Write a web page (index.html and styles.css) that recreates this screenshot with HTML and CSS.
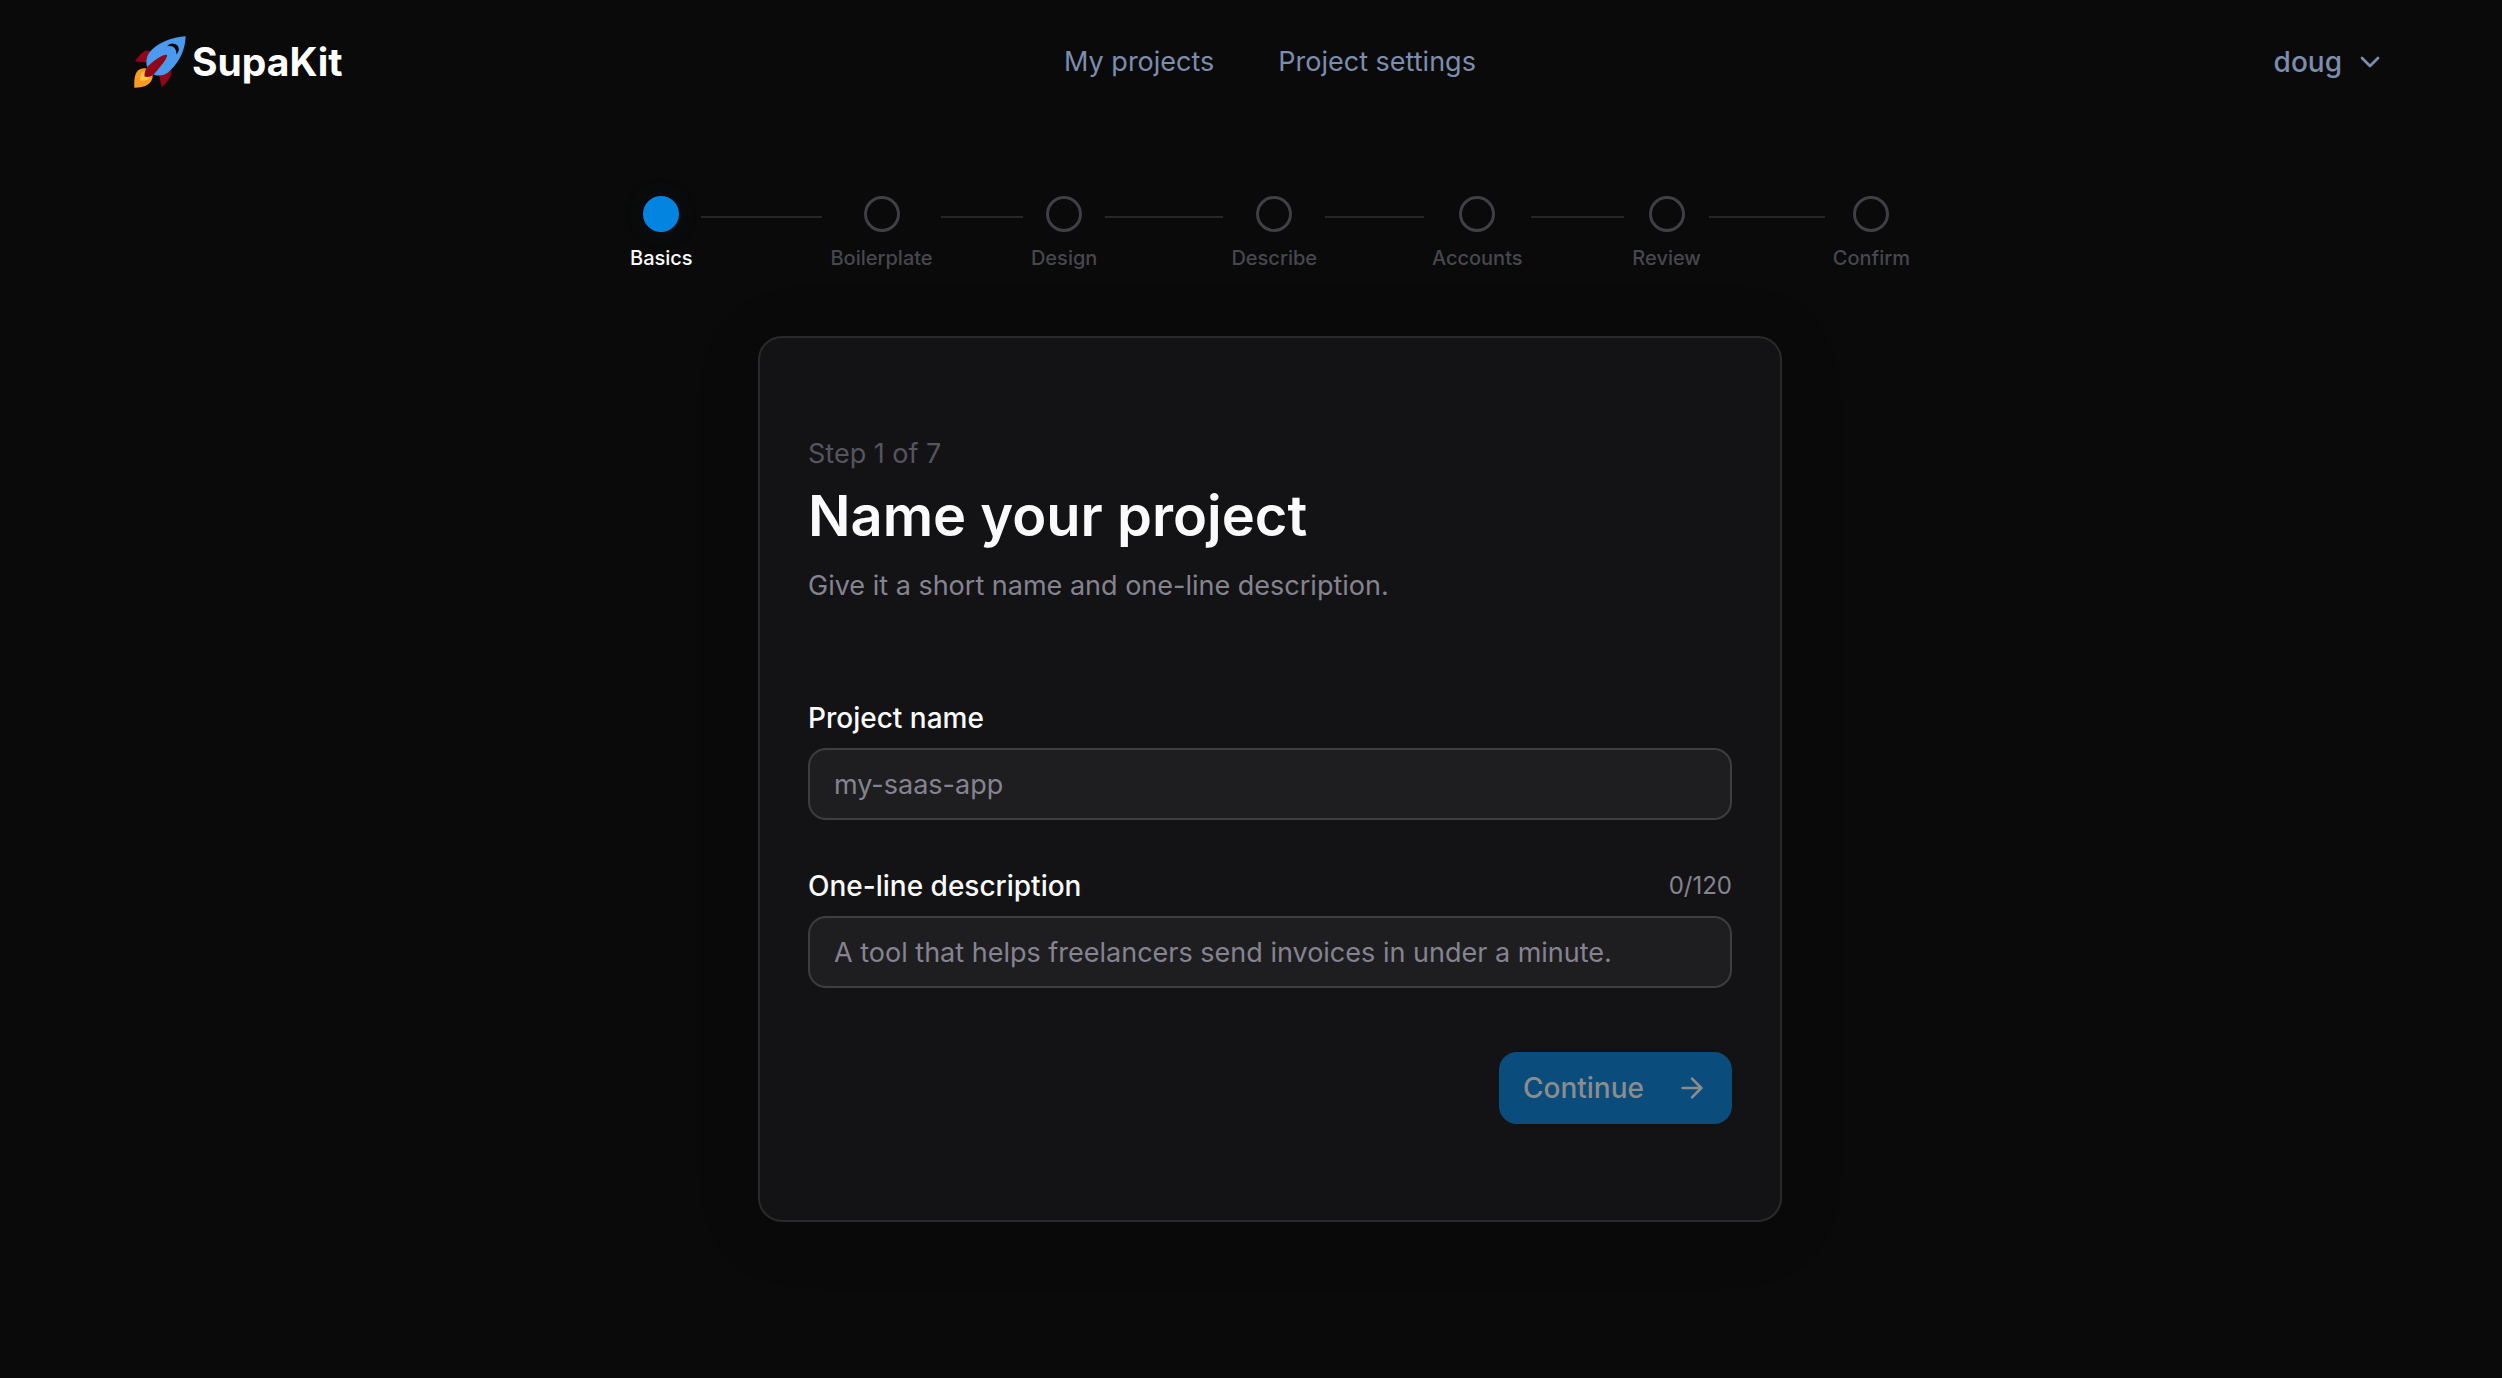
FILE: index.html
```html
<!DOCTYPE html>
<html lang="en">
<head>
<meta charset="utf-8">
<title>SupaKit – Name your project</title>
<link rel="stylesheet" href="styles.css">
</head>
<body>
<header class="header">
  <a class="brand" href="#">
    <svg class="brand-icon" viewBox="0 0 153 153" aria-hidden="true">
      <path fill="#8f0719" d="M3 74 C14 60 24 46 36 43 L56 45 L40 78 Z"/>
      <path fill="#8f0719" d="M110 101 C112 120 98 136 81 151 L74 114 Z"/>
      <path fill="#fb9a22" d="M1 152 C0 126 2 106 17 98 C31 92 43 94 50 104 C60 116 54 134 41 143 C31 150 16 152 1 152 Z"/>
      <path fill="#ffc545" d="M18 131 C17 114 22 104 33 103 C44 104 49 111 48 119 C46 129 35 131 18 131 Z"/>
      <path fill="#4a9bef" d="M152 1 C103 4 58 27 42 54 C31 75 38 100 48 108 C62 119 84 119 98 109 C126 87 151 48 152 1 Z"/>
      <path fill="#8f0719" d="M97 56 C101 62 75 95 58 113 C49 120 39 122 31 119 C30 109 33 98 41 89 C58 72 88 52 97 56 Z"/>
      <path fill="#0a0a0a" d="M98 30 C105 19 120 20 128 28 C135 38 132 49 124 53 C126 37 115 26 98 30 Z"/>
    </svg>
    <span class="brand-name">SupaKit</span>
  </a>
  <nav class="nav">
    <a href="#">My projects</a>
    <a href="#">Project settings</a>
  </nav>
  <button class="account" type="button">
    doug
    <svg class="icon" viewBox="0 0 24 24" aria-hidden="true"><path d="m6 9 6 6 6-6"/></svg>
  </button>
</header>
<main class="main">
  <ol class="steps">
    <li class="step is-current" aria-current="step"><span class="step-mark"><span class="dot"></span>Basics</span></li>
    <li class="step"><span class="step-mark"><span class="dot"></span>Boilerplate</span></li>
    <li class="step"><span class="step-mark"><span class="dot"></span>Design</span></li>
    <li class="step"><span class="step-mark"><span class="dot"></span>Describe</span></li>
    <li class="step"><span class="step-mark"><span class="dot"></span>Accounts</span></li>
    <li class="step"><span class="step-mark"><span class="dot"></span>Review</span></li>
    <li class="step"><span class="step-mark"><span class="dot"></span>Confirm</span></li>
  </ol>
  <form class="card">
    <p class="count">Step 1 of 7</p>
    <h1 class="title">Name your project</h1>
    <p class="lead">Give it a short name and one-line description.</p>
    <div class="field">
      <div class="field-head"><label for="name">Project name</label></div>
      <input id="name" type="text" placeholder="my-saas-app">
    </div>
    <div class="field">
      <div class="field-head"><label for="desc">One-line description</label><span class="counter">0/120</span></div>
      <input id="desc" type="text" maxlength="120" placeholder="A tool that helps freelancers send invoices in under a minute.">
    </div>
    <button class="submit" type="submit" disabled>
      Continue
      <svg class="icon" viewBox="0 0 24 24" aria-hidden="true"><path d="M5 12h14M12 5l7 7-7 7"/></svg>
    </button>
  </form>
</main>
</body>
</html>
```
FILE: styles.css
```css
* { box-sizing: border-box; }

body {
  margin: 0;
  min-height: 100vh;
  padding-left: 38px;
  background: #0a0a0a;
  color: #fafafa;
  font: 400 27px/40px Inter, "Liberation Sans", sans-serif;
}

a { color: inherit; text-decoration: none; }
p, h1 { margin: 0; }

.icon {
  width: 32px;
  height: 32px;
  fill: none;
  stroke: currentColor;
  stroke-width: 2;
  stroke-linecap: round;
  stroke-linejoin: round;
}

.header {
  display: grid;
  grid-template-columns: 1fr auto 1fr;
  align-items: center;
  height: 124px;
  padding: 0 96px;
  color: #7c8dad;
}

.brand {
  display: flex;
  align-items: center;
  gap: 6px;
  color: #fff;
}

.brand-icon { width: 52px; height: 52px; }
.brand-name { font-size: 39px; font-weight: 700; }

.nav { display: flex; gap: 64px; }

.account {
  display: flex;
  align-items: center;
  justify-self: end;
  gap: 12px;
  padding: 8px 20px;
  border: 0;
  background: none;
  color: inherit;
  font: inherit;
  font-size: 28px;
  font-weight: 500;
}

.main {
  display: flex;
  flex-direction: column;
  align-items: center;
  gap: 64px;
  padding: 72px 48px 64px;
}

.steps {
  display: flex;
  width: 100%;
  max-width: 1280px;
  margin: 0;
  padding: 0;
  list-style: none;
  color: #47474f;
  font-size: 20px;
  font-weight: 500;
  line-height: 28px;
}

.step { display: flex; flex: 1; }
.step:last-child { flex: none; }

.step:not(:last-child)::after {
  content: "";
  flex: 1;
  height: 2px;
  margin: 20px 8px 0;
  background: #262626;
}

.step-mark {
  display: flex;
  flex-direction: column;
  align-items: center;
  gap: 12px;
}

.dot {
  width: 36px;
  height: 36px;
  border: 3px solid #3f3f46;
  border-radius: 50%;
}

.is-current { color: #fafafa; }

.is-current .dot {
  border-color: #0284e0;
  background: #0284e0;
  box-shadow: 0 0 32px rgba(2, 132, 224, 0.06);
}

.card {
  display: flex;
  flex-direction: column;
  width: 100%;
  max-width: 1024px;
  padding: 96px 48px;
  border: 2px solid #2a2a2a;
  border-radius: 24px;
  background: #131315;
  box-shadow: 0 8px 64px rgba(0, 0, 0, 0.15);
}

.count { color: #55555e; }

.title {
  margin: 10px 0 18px;
  font-size: 56px;
  font-weight: 600;
  line-height: 64px;
}

.lead { color: #868391; }

.field { margin-top: 46px; }
.lead + .field { margin-top: 92px; }

.field-head {
  display: flex;
  align-items: center;
  justify-content: space-between;
  margin-bottom: 10px;
  font-size: 28px;
  font-weight: 500;
}

.counter {
  color: #868391;
  font-size: 24px;
  font-weight: 400;
}

.field input {
  display: block;
  width: 100%;
  height: 72px;
  padding: 0 24px;
  border: 2px solid #3d3d3f;
  border-radius: 18px;
  background: #1e1e20;
  color: #fafafa;
  font: inherit;
}

.field input::placeholder { color: #868391; opacity: 1; }

.submit {
  display: flex;
  align-items: center;
  align-self: flex-end;
  gap: 32px;
  height: 72px;
  margin-top: 64px;
  padding: 0 24px;
  border: 0;
  border-radius: 18px;
  background: #0a4c7b;
  color: #8c8c8c;
  font: inherit;
  font-size: 28px;
  font-weight: 500;
}
```
